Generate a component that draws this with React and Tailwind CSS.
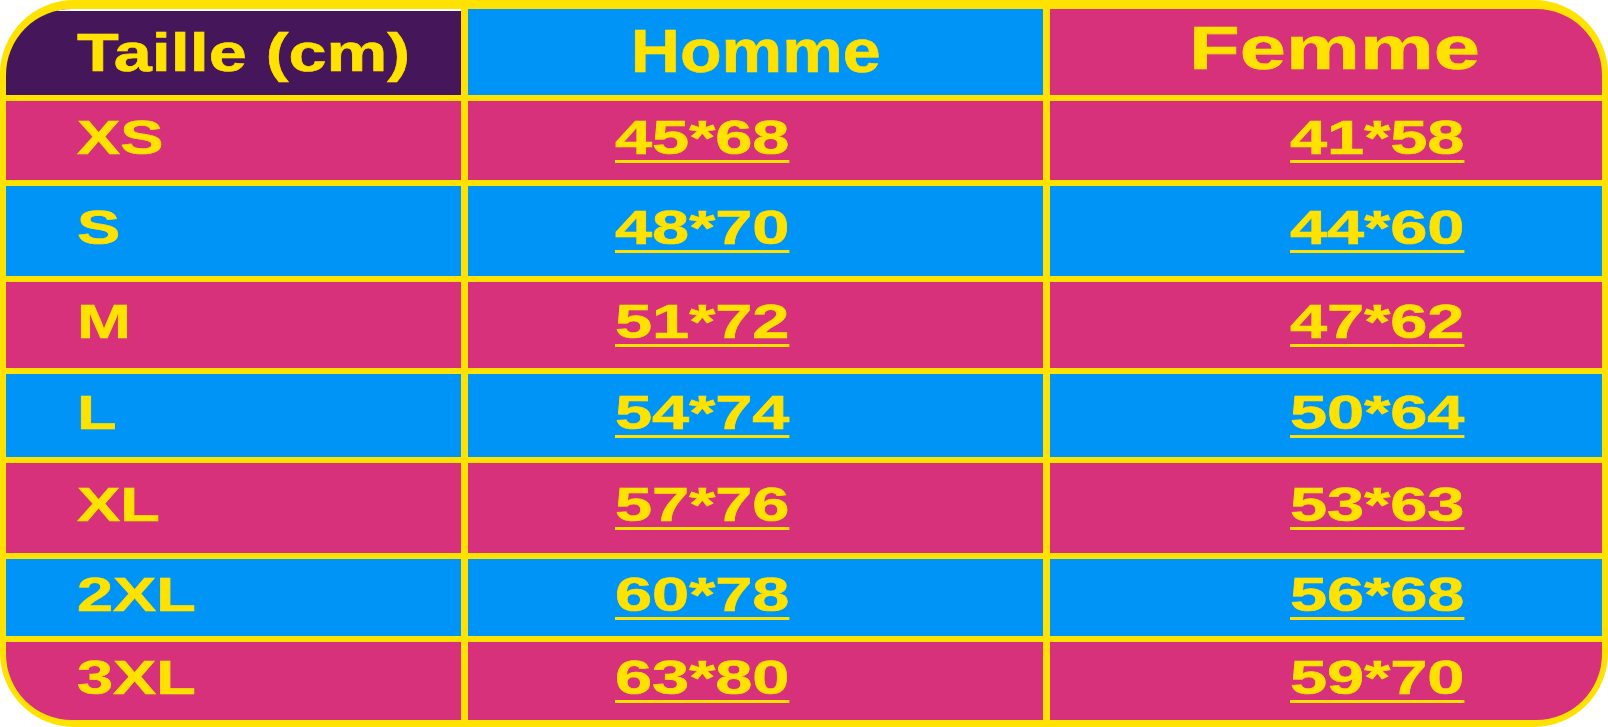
import React from 'react';

const PINK = 'bg-[#d6317a]';
const BLUE = 'bg-[#0194f7]';

const rows = [
  { size: 'XS', homme: '45*68', femme: '41*58', bg: PINK },
  { size: 'S', homme: '48*70', femme: '44*60', bg: BLUE },
  { size: 'M', homme: '51*72', femme: '47*62', bg: PINK },
  { size: 'L', homme: '54*74', femme: '50*64', bg: BLUE },
  { size: 'XL', homme: '57*76', femme: '53*63', bg: PINK },
  { size: '2XL', homme: '60*78', femme: '56*68', bg: BLUE },
  { size: '3XL', homme: '63*80', femme: '59*70', bg: PINK },
];

const Value = ({ children }) => (
  <span className="inline-block origin-left scale-x-[1.39] text-[48px] leading-none font-bold [-webkit-text-stroke:0.6px_#ffe200] underline decoration-[2.5px] underline-offset-[6px]">
    {children}
  </span>
);

const App = () => (
  <div className="w-[1608px] h-[727px] bg-white font-['Liberation_Sans',Arial,sans-serif] text-[#ffe200]">
    <div className="h-full rounded-[74px] bg-[#ffe200] pt-[9px] px-[6px] pb-[7px]">
      <div className="grid h-full grid-cols-[455px_575px_552px] grid-rows-[86px_79px_90px_86px_83px_90px_77px_78px] gap-x-[7px] gap-y-[6px] overflow-hidden rounded-[66px]">
        {/* header */}
        <div className="flex items-center border-t-2 border-white bg-[#46165a] pl-[71px] pb-[2px]">
          <span className="inline-block origin-left scale-x-[1.29] text-[53px] leading-none font-bold [-webkit-text-stroke:0.6px_#ffe200]">Taille (cm)</span>
        </div>
        <div className={`flex items-center justify-center ${BLUE} pb-[2px]`}>
          <span className="inline-block scale-x-[1.1] text-[62px] leading-none font-bold [-webkit-text-stroke:0.6px_#ffe200]">Homme</span>
        </div>
        <div className={`flex items-center justify-center ${PINK} pl-[18px] pb-[8px]`}>
          <span className="inline-block scale-x-[1.34] text-[62px] leading-none font-bold [-webkit-text-stroke:0.6px_#ffe200]">Femme</span>
        </div>

        {rows.map(({ size, homme, femme, bg }) => (
          <React.Fragment key={size}>
            <div className={`flex items-center ${bg} pl-[71px] pb-[6px]`}>
              <span className="inline-block origin-left scale-x-[1.35] text-[48px] leading-none font-bold [-webkit-text-stroke:0.6px_#ffe200]">{size}</span>
            </div>
            <div className={`flex items-center ${bg} pl-[147px] pb-[6px]`}>
              <Value>{homme}</Value>
            </div>
            <div className={`flex items-center ${bg} pl-[240px] pb-[6px]`}>
              <Value>{femme}</Value>
            </div>
          </React.Fragment>
        ))}
      </div>
    </div>
  </div>
);

export default App;
